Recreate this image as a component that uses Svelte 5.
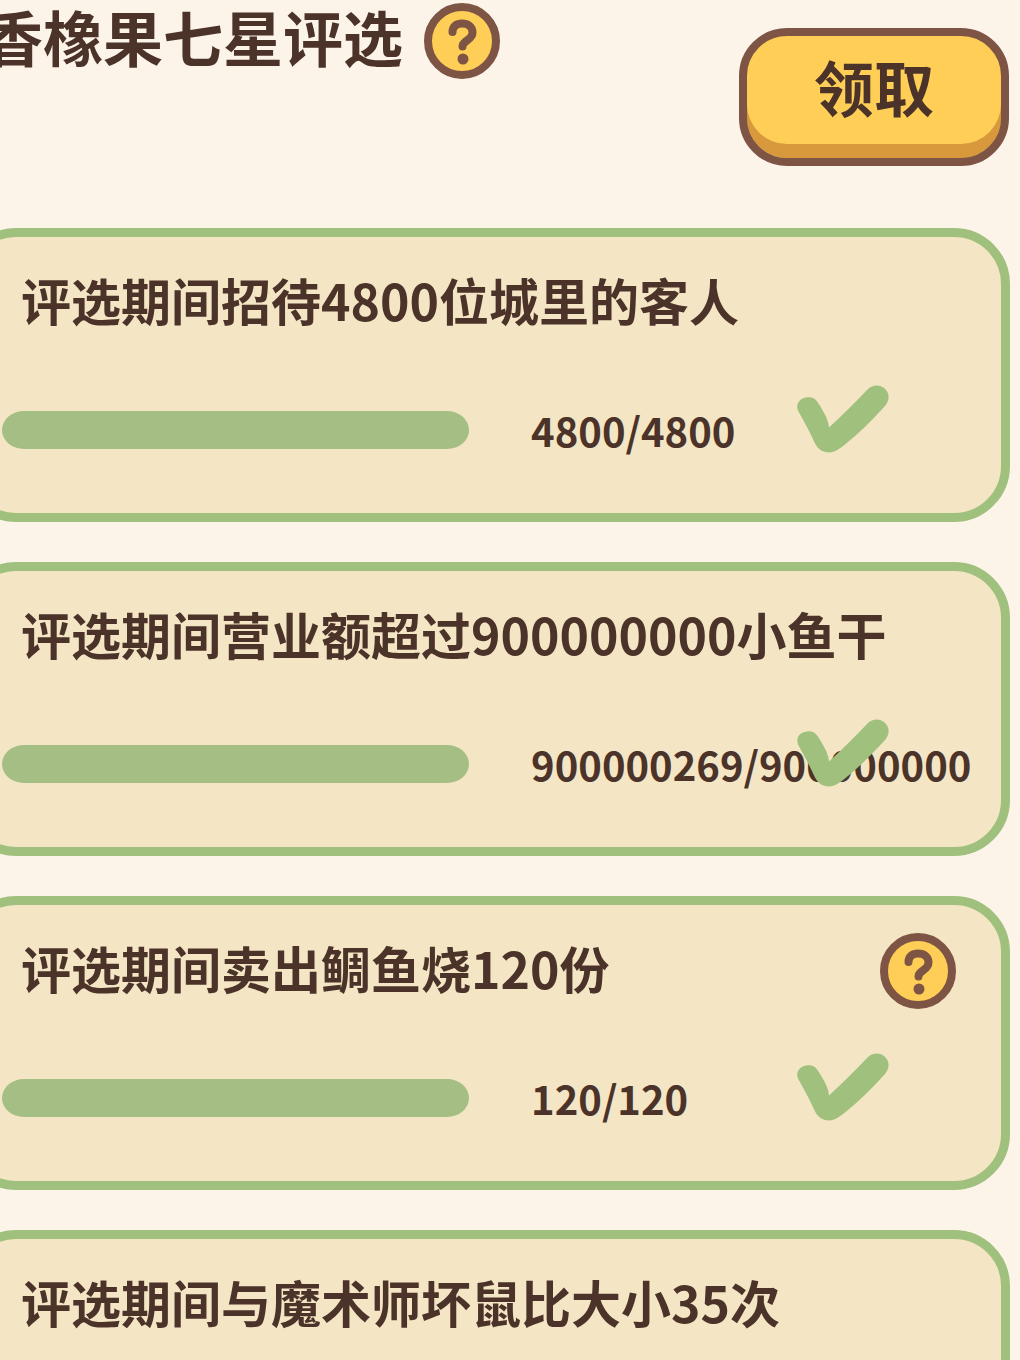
<script lang="ts">
    interface Task {
        id: number;
        title: string;
        current?: number;
        goal?: number;
        help?: boolean;
    }

    const tasks: Task[] = [
        { id: 1, title: "评选期间招待4800位城里的客人", current: 4800, goal: 4800 },
        {
            id: 2,
            title: "评选期间营业额超过900000000小鱼干",
            current: 900000269,
            goal: 900000000,
        },
        { id: 3, title: "评选期间卖出鲷鱼烧120份", current: 120, goal: 120, help: true },
        { id: 4, title: "评选期间与魔术师坏鼠比大小35次" },
    ];

    let claimed = $state(false);

    function percent(current: number, goal: number): number {
        return Math.min(100, (current / goal) * 100);
    }
</script>

{#snippet helpButton()}
    <button class="help" type="button" aria-label="?">
        <svg viewBox="0 0 76 76" aria-hidden="true">
            <circle class="coin" cx="38" cy="38" r="34" />
            <path
                class="hook"
                d="M28.500 29C28.500 23 33 20.500 38 20.500C44 20.500 48.500 23.500 48.500 29.500C48.500 37.500 38.500 37 38.500 43.500"
            />
            <circle class="dot" cx="39" cy="56" r="5.500" />
        </svg>
    </button>
{/snippet}

<main class="page">
    <header class="top">
        <div class="heading">
            <h1>香橡果七星评选</h1>
            {@render helpButton()}
        </div>
        <button class="claim" type="button" onclick={() => (claimed = true)} disabled={claimed}>
            领取
        </button>
    </header>

    <ul class="tasks">
        {#each tasks as task (task.id)}
            <li class="card">
                <div class="card-head">
                    <h2>{task.title}</h2>
                    {#if task.help}
                        {@render helpButton()}
                    {/if}
                </div>
                {#if task.current !== undefined && task.goal !== undefined}
                    <div class="status">
                        <div
                            class="track"
                            role="progressbar"
                            aria-label={task.title}
                            aria-valuenow={task.current}
                            aria-valuemax={task.goal}
                        >
                            <div
                                class="fill"
                                style="width: {percent(task.current, task.goal)}%"
                            ></div>
                        </div>
                        <span class="count">{task.current}/{task.goal}</span>
                        {#if task.current >= task.goal}
                            <svg class="check" viewBox="0 0 90 67" aria-hidden="true">
                                <path
                                    d="M0.500 25.500C-3.500 17 3 11.300 11 11.300C15 11.300 17.500 13 19.500 16C23 21.500 26.500 27 28.700 32.300Q30.500 36.500 31 41.500Q50 24 70 3C74 -1 81 -2 86 2C92 7 92 14 87 20C74 34 61 47.500 47 58.500C43 61.500 40 64 36 65.500C28 68.500 20 64 17 57.500C12 46.500 6.500 36 0.500 25.500Z"
                                />
                            </svg>
                        {/if}
                    </div>
                {/if}
            </li>
        {/each}
    </ul>
</main>

<style>
    :global(body) {
        margin: 0;
        background: #fdf4e9;
    }

    .page {
        height: 100vh;
        overflow: hidden;
        background: #fdf4e9;
        color: #4b332a;
        font-family: "Noto Sans CJK SC", sans-serif;
        font-weight: 700;
    }

    h1,
    h2 {
        margin: 0;
        font-weight: inherit;
        white-space: nowrap;
    }

    h1 {
        font-size: 60px;
        line-height: 66px;
    }

    h2 {
        font-size: 50px;
        line-height: 68px;
    }

    .top {
        display: flex;
        justify-content: space-between;
        align-items: flex-start;
        box-sizing: border-box;
        min-height: 228px;
        padding-right: 11px;
    }

    /* the list runs past the left edge of the screen */
    .heading {
        display: flex;
        align-items: flex-start;
        gap: 21px;
        margin-left: -17px;
        padding-top: 3px;
    }

    .help {
        flex: none;
        width: 76px;
        height: 76px;
        padding: 0;
        border: 0;
        background: none;
        cursor: pointer;
    }

    .help svg {
        display: block;
        width: 100%;
        height: 100%;
    }

    .coin {
        fill: #ffce56;
        stroke: #7e5444;
        stroke-width: 8;
    }

    .hook {
        fill: none;
        stroke: #7e5444;
        stroke-width: 8;
        stroke-linecap: round;
    }

    .dot {
        fill: #7e5444;
    }

    .claim {
        box-sizing: border-box;
        width: 270px;
        height: 138px;
        margin-top: 28px;
        padding: 0 0 22px;
        border: 8px solid #7e5444;
        border-radius: 48px;
        background: #ffce56;
        box-shadow: inset 0 -14px #d8993c;
        color: inherit;
        font: inherit;
        font-size: 60px;
        line-height: 80px;
        cursor: pointer;
    }

    .tasks {
        display: flex;
        flex-direction: column;
        gap: 40px;
        margin: 0 10px 0 -40px;
        padding: 0;
        list-style: none;
    }

    .card {
        box-sizing: border-box;
        min-height: 294px;
        padding: 28px 0 0 33px;
        border: 9px solid #a0c07d;
        border-radius: 56px;
        background: #f4e6c4;
    }

    .card-head {
        display: flex;
        justify-content: space-between;
        align-items: flex-start;
        height: 72px;
        padding: 0 45px 0 19px;
    }

    .status {
        display: flex;
        align-items: flex-start;
        margin-top: 49px;
        padding-right: 113px;
    }

    .track {
        flex: 7;
        height: 38px;
        margin: 25px 62px 0 0;
    }

    .fill {
        height: 100%;
        border-radius: 22px / 19px;
        background: #a5be84;
    }

    .count {
        flex: 4;
        min-width: 0;
        margin-top: 14px;
        font-size: 40px;
        line-height: 60px;
        white-space: nowrap;
    }

    /* sits on top of counts that are too long for their column */
    .check {
        position: relative;
        flex: none;
        width: 90px;
        height: 67px;
        overflow: visible;
        fill: #a0c07d;
    }
</style>
